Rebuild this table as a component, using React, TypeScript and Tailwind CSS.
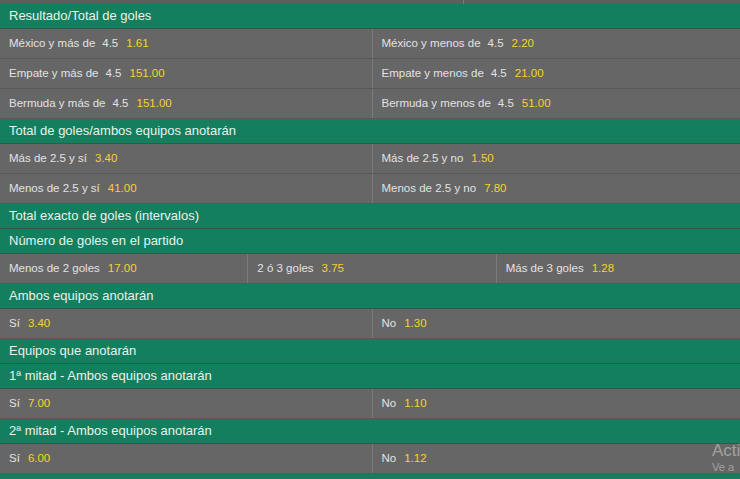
type Cell = { label: string; line?: string; odds: string };

interface Market {
  title: string;
  rows: Cell[][];
}

const markets: Market[] = [
  {
    title: 'Resultado/Total de goles',
    rows: [
      [
        { label: 'México y más de', line: '4.5', odds: '1.61' },
        { label: 'México y menos de', line: '4.5', odds: '2.20' },
      ],
      [
        { label: 'Empate y más de', line: '4.5', odds: '151.00' },
        { label: 'Empate y menos de', line: '4.5', odds: '21.00' },
      ],
      [
        { label: 'Bermuda y más de', line: '4.5', odds: '151.00' },
        { label: 'Bermuda y menos de', line: '4.5', odds: '51.00' },
      ],
    ],
  },
  {
    title: 'Total de goles/ambos equipos anotarán',
    rows: [
      [
        { label: 'Más de 2.5 y sí', odds: '3.40' },
        { label: 'Más de 2.5 y no', odds: '1.50' },
      ],
      [
        { label: 'Menos de 2.5 y sí', odds: '41.00' },
        { label: 'Menos de 2.5 y no', odds: '7.80' },
      ],
    ],
  },
  { title: 'Total exacto de goles (intervalos)', rows: [] },
  {
    title: 'Número de goles en el partido',
    rows: [
      [
        { label: 'Menos de 2 goles', odds: '17.00' },
        { label: '2 ó 3 goles', odds: '3.75' },
        { label: 'Más de 3 goles', odds: '1.28' },
      ],
    ],
  },
  {
    title: 'Ambos equipos anotarán',
    rows: [
      [
        { label: 'Sí', odds: '3.40' },
        { label: 'No', odds: '1.30' },
      ],
    ],
  },
  { title: 'Equipos que anotarán', rows: [] },
  {
    title: '1ª mitad - Ambos equipos anotarán',
    rows: [
      [
        { label: 'Sí', odds: '7.00' },
        { label: 'No', odds: '1.10' },
      ],
    ],
  },
  {
    title: '2ª mitad - Ambos equipos anotarán',
    rows: [
      [
        { label: 'Sí', odds: '6.00' },
        { label: 'No', odds: '1.12' },
      ],
    ],
  },
];

const OddsCell = ({ cell, first }: { cell: Cell; first: boolean }) => (
  <div
    className={`flex-1 flex items-center pl-[9px] text-[11.5px] text-[#e2e2e2] ${
      first ? '' : 'border-l border-[#7a7a7a]'
    }`}
  >
    <span>{cell.label}</span>
    {cell.line && <span className="ml-[7px]">{cell.line}</span>}
    <span className="ml-[8px] text-[#f7d32a]">{cell.odds}</span>
  </div>
);

export default function App() {
  return (
    <div
      className="relative w-[740px] h-[479px] overflow-hidden bg-[#147f5e]"
      style={{ fontFamily: '"Liberation Sans", Arial, sans-serif' }}
    >
      <div className="w-[744px]">
        {/* top strip from the previous market */}
        <div className="flex h-[4px] bg-[#5e5e5e]">
          <div className="w-[464px] border-r border-[#7a7a7a]" />
        </div>

        {markets.map((market) => (
          <div key={market.title}>
            <div className="h-[25px] flex items-center pl-[9px] bg-[#147f5e] border-b border-[#2d5b4a] text-[13px] text-[#e8f2ec]">
              {market.title}
            </div>
            {market.rows.map((row, i) => (
              <div
                key={i}
                className="flex h-[30px] bg-[#666666] border-b border-[#585858]"
              >
                {row.map((cell, j) => (
                  <OddsCell key={j} cell={cell} first={j === 0} />
                ))}
              </div>
            ))}
          </div>
        ))}
      </div>

      {/* windows activation watermark, clipped by the window edge */}
      <div className="absolute left-[712px] top-[442px] leading-none text-white/40 whitespace-nowrap pointer-events-none">
        <div className="text-[17px]">Acti</div>
        <div className="text-[11px] mt-[3px]">Ve a</div>
      </div>
    </div>
  );
}
